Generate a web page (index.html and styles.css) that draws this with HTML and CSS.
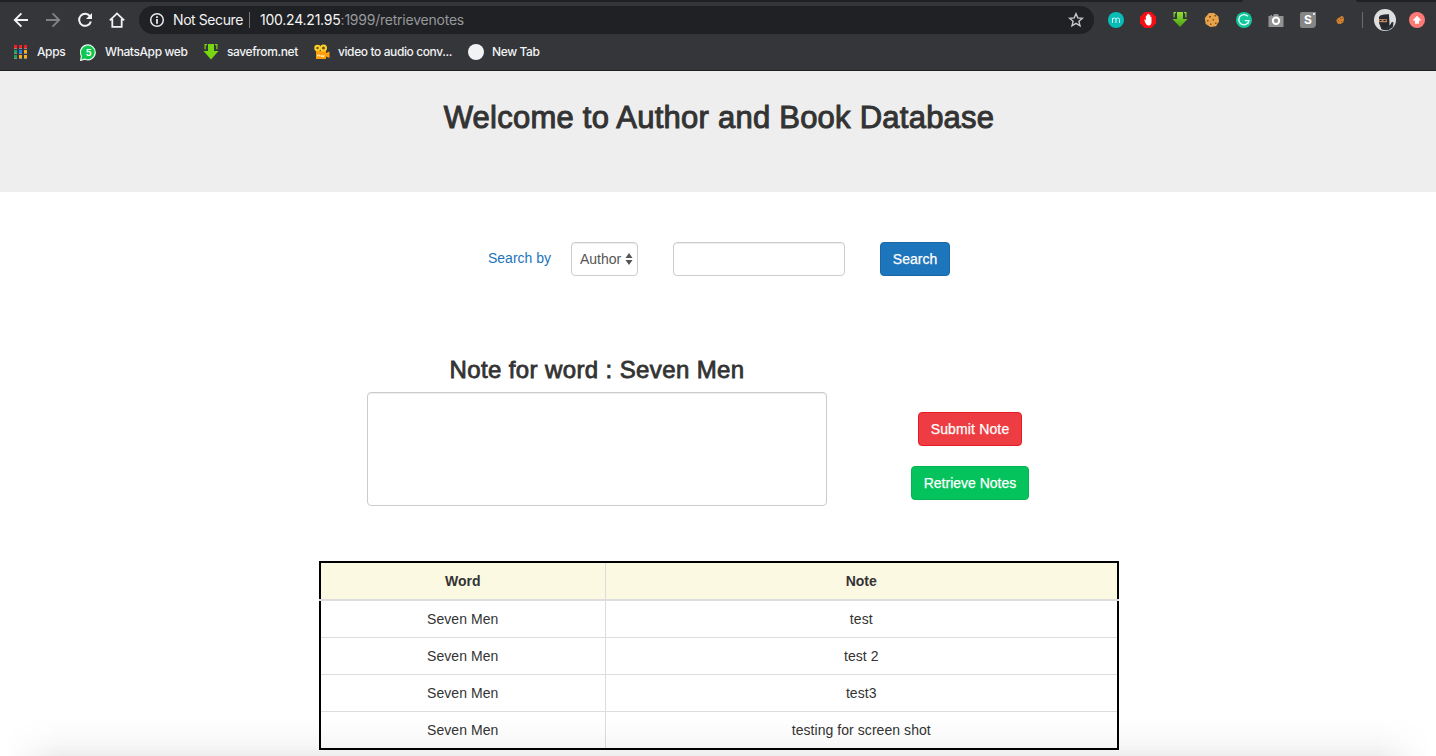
FILE: index.html
```html
<!DOCTYPE html>
<html lang="en">
<head>
<meta charset="utf-8">
<title>Author and Book Database</title>
<link rel="stylesheet" href="styles.css">
</head>
<body>
<div class="browser">
  <div class="tabstrip"><i class="tab-left"></i><i class="tab-right"></i></div>
  <div class="toolbar">
    <div class="nav">
      <svg width="16" height="16" viewBox="0 0 16 16" fill="none" stroke="#f1f3f4" stroke-width="1.9"><path d="M15 8H2M8.4 1.4 1.8 8l6.6 6.6"/></svg>
      <svg width="16" height="16" viewBox="0 0 16 16" fill="none" stroke="#818286" stroke-width="1.9"><path d="M1 8h13M7.6 1.4 14.2 8l-6.6 6.6"/></svg>
      <svg width="16" height="16" viewBox="0 0 16 16" fill="none" stroke="#f1f3f4" stroke-width="2"><path d="M13.2 4.6A6 6 0 1 0 13.9 9.5"/><path d="M15 1v6H9z" fill="#f1f3f4" stroke="none"/></svg>
      <svg width="16" height="16" viewBox="0 0 16 16" fill="none" stroke="#f1f3f4" stroke-width="1.8"><path d="M.8 8.4 8 1.4l7.2 7M3.3 7v7.8h9.4V7"/></svg>
    </div>
    <div class="address">
      <svg width="16" height="16" viewBox="0 0 16 16"><circle cx="8" cy="8" r="6.3" fill="none" stroke="#e8eaed" stroke-width="1.5"/><path d="M7.1 4.2h1.8V6H7.1zM7.1 7.1h1.8v4.7H7.1z" fill="#e8eaed"/></svg>
      <span class="insecure">Not Secure</span>
      <span class="url"><b>100.24.21.95</b>:1999/retrievenotes</span>
      <svg class="star" width="16" height="16" viewBox="0 0 16 16" fill="none" stroke="#c8cace" stroke-width="1.4"><path d="m8 1.7 1.8 4.2 4.6.4-3.5 3 1.1 4.5L8 11.4l-4 2.4 1.1-4.5-3.5-3 4.6-.4z"/></svg>
    </div>
    <div class="extensions">
      <span class="ext teal"><svg width="16" height="16" viewBox="0 0 16 16" fill="none" stroke="#d5f7f5" stroke-width="1"><path d="M4.5 11V6m0 1.4Q5 6 6.3 6 8 6 8 7.7V11m0-3.3Q8.3 6 9.8 6q1.7 0 1.7 1.7V11"/></svg></span>
      <svg width="16" height="16" viewBox="0 0 16 16"><path d="M4.7 0h6.6L16 4.7v6.6L11.3 16H4.7L0 11.3V4.7z" fill="#f40d12"/><path d="m4.2 7.7.8-.3.8 1.2V4q.6-.8 1.1 0V2.6q.7-.9 1.2 0V2q.7-.7 1.2.1V3.3q.7-.7 1.1 0V5q.7-.5 1.1.1v5.1Q11.4 13.6 8.2 13.6 6.2 13.4 5.4 11z" fill="#fff"/></svg>
      <svg width="16" height="16" viewBox="0 0 16 16"><defs><linearGradient id="green" x2="0" y2="1"><stop stop-color="#91de3a"/><stop offset="1" stop-color="#48a10d"/></linearGradient></defs><path d="M5 0h6v7h4.5L8 15 .5 7H5zM1.5 0H4v1.2H2.7v4H1.5zM12 0h2.5v5.2h-1.2v-4H12z" fill="url(#green)"/></svg>
      <svg width="16" height="16" viewBox="0 0 16 16"><path d="m5 1 5 0 4.4 3.5.6 5-3 4.8-5.5.8-4.8-3L.8 6z" fill="#e5a34b"/><path d="M5 4h2v1.5H5zM10.5 3H12v1.5h-1.5zM8.5 7H10v1.5H8.500zM3 8h1.500v1.500H3zM6 11.500h1.500V13H6zM11 10.500h1.500V12H11z" fill="#8d4d13"/></svg>
      <svg width="16" height="16" viewBox="0 0 16 16"><circle cx="8" cy="8" r="8" fill="#12c69e"/><path d="M11.8 4.3A5.1 5.1 0 1 0 13 8.6H8.8M12.900 8.600l-1.200 3.400" fill="none" stroke="#eafff8" stroke-width="1.3"/></svg>
      <svg width="16" height="16" viewBox="0 0 16 16"><path d="M.5 4h2V3H4v1h1l1-2h4l1 2h4.500v11H.5z" fill="#929292"/><circle cx="8" cy="8.700" r="3.200" fill="none" stroke="#fff" stroke-width="2"/></svg>
      <span class="ext s-ext">S<i></i></span>
      <svg width="16" height="16" viewBox="0 0 16 16"><path d="M4.2 8.5 6 6l2-.7 1.3-1.4 2 .5.8 3-1 3-2.500 1.700-2.900-.4z" fill="#d08231"/><path d="M6 8h1v1H6zM8 6h1v1H8zM9 9h1v1H9zM10 6h1v1h-1z" fill="#94531b"/></svg>
      <i class="divider"></i>
      <svg class="avatar" width="22" height="22" viewBox="0 0 22 22"><circle cx="11" cy="11" r="11" fill="#dedede"/><path d="M5 8Q6 5 15 5.200L15.500 15l-.5 4H7L5 14z" fill="#25292f"/><path d="M4.800 10 13 10.300v2.900H5.200z" fill="#c3875f"/><path d="M5.600 11h2v1h-2zM9.500 11h2.200v1H9.500z" fill="#221b1a"/><path d="m7 17 4 1.500 5-2.500 3.500-3-.5 5Q13 23.500 7 20z" fill="#2b3038"/><path d="m16.500 17 2-4" stroke="#22252a" stroke-width="1.2"/></svg>
      <svg width="16" height="16" viewBox="0 0 16 16"><circle cx="8" cy="8" r="8" fill="#ff7a76"/><path d="m8 3.800 4.500 4.600H10v3.400H6V8.400H3.500z" fill="#fff"/></svg>
    </div>
  </div>
  <div class="bookmarks">
    <span class="mark apps"><svg width="14" height="14" viewBox="0 0 14 14"><path d="M0 0h3v3H0zM5 0h3v3H5zM10 0h3v3h-3z" fill="#f31d22"/><path d="M0 5h3v3H0zM0 10h3v3H0z" fill="#19a65a"/><path d="M5 5h3v3H5z" fill="#1683f6"/><path d="M10 5h3v3h-3zM5 10h3v3H5zM10 10h3v3h-3z" fill="#f7ab16"/><path d="M0 3.500h3M5 3.500h3M10 3.500h3M0 8.500h3M5 8.500h3M10 8.500h3M0 13.500h3M5 13.500h3M10 13.500h3" stroke="#8b8b8b"/></svg>Apps</span>
    <span class="mark whatsapp"><svg width="17" height="17" viewBox="0 0 17 17"><path d="M.7 16.300 1.400 12A7.400 7.400 0 1 1 5 15.200z" fill="#10c750" stroke="#e8fff0" stroke-width="1.200"/><text class="badge-number" x="8.500" y="11.800" text-anchor="middle">5</text></svg>WhatsApp web</span>
    <span class="mark savefrom"><svg width="16" height="16" viewBox="0 0 16 16"><path d="M5 0h6v7h4.500L8 15.500.5 7H5zM1.500 0H4v1.200H2.700v4H1.500zM12 0h2.500v5.200h-1.200v-4H12z" fill="#77d711"/></svg>savefrom.net</span>
    <span class="mark video"><svg width="16" height="16" viewBox="0 0 16 16"><path d="M2 7h10v2l3.500-1.500V14L12 12.500V15H2z" fill="#ff9d0b"/><circle cx="3.500" cy="4" r="2.200" fill="#65521d" stroke="#ffd22a" stroke-width="2"/><circle cx="9.500" cy="4" r="2.500" fill="#65521d" stroke="#ffd22a" stroke-width="2"/><path d="M3.500 12.500V11h2v1.500M7 11v1.500l1.500-1V12.500h1.500V11" stroke="#fff1bc" fill="none"/></svg>video to audio conv...</span>
    <span class="mark newtab"><i></i>New Tab</span>
  </div>
</div>
<header class="hero"><h1>Welcome to Author and Book Database</h1></header>
<main>
  <form class="search">
    <label>Search by</label>
    <div class="select"><span>Author</span><svg width="8" height="14" viewBox="0 0 8 14"><path d="m4 1 3.500 5h-7zM4 13l3.500-5h-7z" fill="#555"/></svg></div>
    <input class="control" type="text" aria-label="Search">
    <button class="btn blue" type="button">Search</button>
  </form>
  <section class="notes">
    <div class="editor"><h2>Note for word : Seven Men</h2><textarea class="control" aria-label="Note"></textarea></div>
    <div class="actions"><button class="btn red">Submit Note</button><button class="btn green">Retrieve Notes</button></div>
  </section>
  <table>
    <thead><tr><th class="word">Word</th><th>Note</th></tr></thead>
    <tbody><tr><td>Seven Men</td><td>test</td></tr><tr><td>Seven Men</td><td>test 2</td></tr><tr><td>Seven Men</td><td>test3</td></tr><tr><td>Seven Men</td><td>testing for screen shot</td></tr></tbody>
  </table>
</main>
<div class="bottom-shade"></div>
</body>
</html>
```

FILE: styles.css
```css
* { box-sizing: border-box; }
body { margin: 0; height: 756px; position: relative; overflow: hidden; background: #fff; color: #333; font: 14px/20px "Liberation Sans", sans-serif; }
svg { display: block; flex: none; }
.browser { height: 71px; background: #35363a; border-bottom: 1px solid #1f1f22; font-family: Inter, sans-serif; color: #f1f3f4; }
.tabstrip { height: 2px; display: flex; justify-content: space-between; }
.tab-left, .tab-right { background: #202124; }
.tab-left { width: 1243px; border-bottom-right-radius: 4px; }
.tab-right { width: 80px; border-bottom-left-radius: 4px; }
.toolbar { height: 36px; display: flex; align-items: center; padding-left: 13px; }
.nav { display: flex; gap: 16px; width: 126px; }
.address { width: 955px; height: 28px; background: #202124; border-radius: 14px; display: flex; align-items: center; padding: 0 10px; font-size: 14px; }
.insecure { width: 77px; height: 16px; line-height: 16px; margin-left: 8px; border-right: 1px solid #75767a; white-space: nowrap; letter-spacing: -.42px; }
.url { margin-left: 10px; color: #96989b; letter-spacing: -.23px; }
.url b { color: #f5f5f5; font-weight: 400; }
.star { margin-left: auto; }
.extensions { display: flex; align-items: center; margin-left: 14px; gap: 16px; }
.ext { width: 16px; height: 16px; }
.teal { border-radius: 50%; background: #08bdb7; }
.s-ext { position: relative; background: #858585; border-radius: 2px 0 4px 2px; color: #fff; text-align: center; font: bold 12px/16px Inter, sans-serif; }
.s-ext i { position: absolute; width: 2px; height: 2px; right: 1px; top: 1px; background: #fff; border-radius: 1px; }
.divider { width: 1px; height: 16px; background: #6b6c70; margin-left: -2px; }
.avatar { margin: 0 -3px 0 -5px; }
.bookmarks { display: flex; align-items: center; height: 28px; font-size: 12px; font-weight: 500; padding-left: 14px; }
.mark { display: flex; align-items: center; white-space: nowrap; letter-spacing: -.4px; }
.apps { width: 66px; gap: 9px; }
.whatsapp { width: 123px; gap: 8px; }
.savefrom { width: 111px; gap: 8px; }
.video { width: 154px; gap: 8px; }
.newtab { gap: 8px; }
.newtab i { width: 16px; height: 16px; border-radius: 50%; background: #f1f3f4; }
.badge-number { font: bold 9px Inter, sans-serif; fill: #fff; }
.hero { height: 121px; background: #eee; padding-top: 30px; text-align: center; }
h1, h2 { margin: 0; font-weight: 400; }
h1 { font-size: 31px; line-height: 33px; letter-spacing: .24px; padding-left: 2px; -webkit-text-stroke: 1px #333; }
.search { margin: 50px 0 0 488px; height: 34px; display: flex; }
label { color: #1b75bb; width: 83px; line-height: 32px; }
.control, .select { border: 1px solid #ccc; border-radius: 4px; background: #fff; box-shadow: inset 0 1px 1px rgba(0,0,0,.075); }
.select { width: 67px; height: 34px; color: #555; padding: 0 4px 0 8px; display: flex; align-items: center; justify-content: space-between; }
input.control { width: 172px; height: 34px; margin: 0 35px; padding: 6px 12px; }
.btn { height: 34px; padding: 6px 0; border: 1px solid; border-radius: 4px; font: 14px/20px "Liberation Sans", sans-serif; color: #fff; -webkit-text-stroke: .25px #fff; }
.blue { width: 70px; background: #1d75bb; border-color: #1967a5; }
.red { width: 104px; background: #ee3d42; border-color: #e51c23; letter-spacing: .15px; }
.green { width: 118px; background: #04c35d; border-color: #03b455; }
.notes { display: flex; margin: 81px 0 0 367px; gap: 84px; height: 149px; }
.editor { width: 460px; }
h2 { text-align: center; font-size: 24px; line-height: 26px; margin-bottom: 9px; letter-spacing: .38px; -webkit-text-stroke: .8px #333; }
textarea { display: block; width: 460px; height: 114px; resize: none; }
.actions { width: 118px; display: flex; flex-direction: column; align-items: center; gap: 20px; padding-top: 55px; }
table { width: 800px; margin: 55px 0 0 319px; border-collapse: collapse; table-layout: fixed; border: 2px solid #000; }
th, td { border: 1px solid #ddd; padding: 8px; text-align: center; line-height: 20px; }
th { background: #fcf9e2; border-bottom-width: 2px; }
td { letter-spacing: .06px; }
.word { width: 285px; }
.bottom-shade { position: absolute; left: 0; right: 0; bottom: 0; height: 40px; pointer-events: none; background: linear-gradient(transparent, rgba(0,0,0,.01) 40%, rgba(0,0,0,.03) 70%, rgba(0,0,0,.065)); mask-image: linear-gradient(90deg, transparent 5px, #000 60px, #000 1376px, transparent 1431px); }
```
